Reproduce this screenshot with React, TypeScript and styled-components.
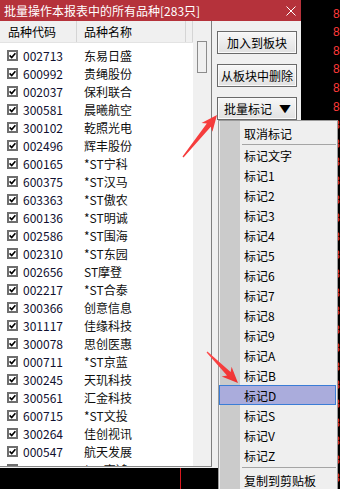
import React from 'react'
import styled, { createGlobalStyle } from 'styled-components'

const GlobalStyle = createGlobalStyle`
  html, body {
    margin: 0;
    padding: 0;
    background: #000;
  }
  body {
    font-family: "Noto Sans CJK SC", "Noto Sans", sans-serif;
    font-size: 12px;
    color: #000;
  }
`

const Screen = styled.div`
  position: relative;
  width: 340px;
  height: 489px;
  overflow: hidden;
  display: flex;
  background: #000;
`

const Window = styled.div`
  width: 301px;
  display: flex;
  flex-direction: column;
`

const TitleBar = styled.div`
  height: 21px;
  background: #b5323b;
  color: #fff;
  display: flex;
  align-items: center;
  justify-content: space-between;
  padding: 0 5px 0 4px;
  font-size: 12px;
  line-height: 21px;
`

const Body = styled.div`
  height: 447px;
  display: flex;
  background: #f0f0f0;
`

const ListBox = styled.div`
  width: 212px;
  height: 446px;
  box-sizing: border-box;
  display: flex;
  background: #fff;
  border-right: 1px solid #7e7e7e;
  border-bottom: 1px solid #8a8a8a;
`

const ListMain = styled.div`
  width: 193px;
  display: flex;
  flex-direction: column;
  overflow: hidden;
`

const Header = styled.div`
  height: 22px;
  box-sizing: border-box;
  display: flex;
  background: #f0f0f0;
  border-bottom: 1px solid #e3e3e3;
  flex-shrink: 0;
`

const HeaderCell = styled.div<{ $w?: number; $pad: number }>`
  ${({ $w }) => ($w ? `width: ${$w}px;` : 'flex: 1;')}
  box-sizing: border-box;
  padding-left: ${({ $pad }) => $pad}px;
  border-right: 1px solid #d5d5d5;
  display: flex;
  align-items: center;
  white-space: nowrap;
`

const Rows = styled.div`
  padding-top: 3px;
  display: flex;
  flex-direction: column;
`

const Row = styled.div`
  height: 18px;
  flex-shrink: 0;
  display: flex;
  align-items: center;
  white-space: nowrap;
`

const Check = styled.span`
  width: 11px;
  height: 11px;
  box-sizing: border-box;
  margin: 0 5px 0 7px;
  border: 2px solid #6e6e6e;
  background: #fff;
  display: flex;
  align-items: center;
  justify-content: center;
`

const Code = styled.span`
  width: 61px;
  color: #101030;
`

const Name = styled.span`
  color: #101010;
`

const ScrollTrack = styled.div`
  width: 18px;
  padding: 20px 0 0 4px;
  box-sizing: border-box;
  background: #f0f0f0;
`

const Thumb = styled.div`
  width: 10px;
  height: 32px;
  box-sizing: border-box;
  border: 1px solid #8c8c8c;
  background: #f0f0f0;
`

const ButtonPanel = styled.div`
  flex: 1;
  display: flex;
  flex-direction: column;
  gap: 10px;
  padding: 10px 0 0 5px;
`

const Button = styled.div`
  width: 80px;
  height: 23px;
  box-sizing: border-box;
  border: 1px solid #6a6a6a;
  background: linear-gradient(#f7f7f7, #e1e1e1);
  box-shadow: inset 0 0 0 1px #fafafa;
  display: flex;
  align-items: center;
  justify-content: center;
  gap: 8px;
  white-space: nowrap;
  font-size: 12px;
`

const Caret = styled.span`
  font-size: 10px;
  transform: scaleX(1.2);
`

const BottomStrip = styled.div`
  height: 21px;
  background: #000;
  display: flex;
`

const RedLine = styled.div`
  width: 1px;
  margin-left: 180px;
  background: #d8181e;
`

const DigitStrip = styled.div`
  flex: 1;
  display: flex;
  flex-direction: column;
  margin-top: -14px;
  padding-left: 32px;
  color: #ff3a3a;
  font-family: "Liberation Sans", sans-serif;
  font-size: 12px;
  line-height: 18.6px;
`

const Menu = styled.div`
  position: absolute;
  left: 218px;
  top: 120px;
  width: 120px;
  height: 380px;
  box-sizing: border-box;
  padding-top: 2px;
  border: 1px solid #9a9a9a;
  background: linear-gradient(to right, #efefef 0 1px, #cbcbcb 1px 21px, #efefef 21px);
  display: flex;
  flex-direction: column;
`

const MenuItem = styled.div<{ $active?: boolean }>`
  height: 20px;
  flex-shrink: 0;
  display: flex;
  align-items: center;
  padding-left: 25px;
  margin-right: 1px;
  white-space: nowrap;
  ${({ $active }) =>
    $active &&
    `
    background: #aaacdc;
    box-shadow: inset 0 0 0 1px #3b7dd6;
  `}
`

const Separator = styled.div<{ $top: number; $bottom: number }>`
  height: 1px;
  flex-shrink: 0;
  background: #a5a5a5;
  margin: ${({ $top, $bottom }) => `${$top}px 1px ${$bottom}px 23px`};
`

const Overlay = styled.svg`
  position: absolute;
  left: 0;
  top: 0;
  pointer-events: none;
`

const STOCKS: [string, string][] = [
  ['002713', '东易日盛'],
  ['600992', '贵绳股份'],
  ['002037', '保利联合'],
  ['300581', '晨曦航空'],
  ['300102', '乾照光电'],
  ['002496', '辉丰股份'],
  ['600165', '*ST宁科'],
  ['600375', '*ST汉马'],
  ['603363', '*ST傲农'],
  ['600136', '*ST明诚'],
  ['002586', '*ST围海'],
  ['002310', '*ST东园'],
  ['002656', 'ST摩登'],
  ['002217', '*ST合泰'],
  ['300366', '创意信息'],
  ['301117', '佳缘科技'],
  ['300078', '思创医惠'],
  ['000711', '*ST京蓝'],
  ['300245', '天玑科技'],
  ['300561', '汇金科技'],
  ['600715', '*ST文投'],
  ['300264', '佳创视讯'],
  ['000547', '航天发展'],
  ['000851', '*ST高鸿'],
]

const MARKS = ['标记文字', '标记1', '标记2', '标记3', '标记4', '标记5', '标记6', '标记7', '标记8', '标记9', '标记A', '标记B', '标记D', '标记S', '标记V', '标记Z']

// tapered annotation arrow from tail to tip
function arrowPoints(x1: number, y1: number, x2: number, y2: number) {
  const dx = x2 - x1
  const dy = y2 - y1
  const len = Math.hypot(dx, dy)
  const ux = dx / len
  const uy = dy / len
  const nx = -uy
  const ny = ux
  const head = 15
  const bx = x2 - ux * head
  const by = y2 - uy * head
  const pts = [
    [x1 + nx * 0.6, y1 + ny * 0.6],
    [bx + ux * 2 + nx * 2.6, by + uy * 2 + ny * 2.6],
    [bx - ux * 1 + nx * 7, by - uy * 1 + ny * 7],
    [x2, y2],
    [bx - ux * 1 - nx * 7, by - uy * 1 - ny * 7],
    [bx + ux * 2 - nx * 2.6, by + uy * 2 - ny * 2.6],
    [x1 - nx * 0.6, y1 - ny * 0.6],
  ]
  return pts.map(([x, y]) => `${x.toFixed(1)},${y.toFixed(1)}`).join(' ')
}

const CheckMark = () => (
  <svg width="7" height="7" viewBox="0 0 7 7">
    <path d="M0.6 3.4 L2.7 5.6 L6.4 1.2" fill="none" stroke="#000" strokeWidth="1.6" />
  </svg>
)

export default function App() {
  return (
    <Screen>
      <GlobalStyle />
      <Window>
        <TitleBar>
          <span>批量操作本报表中的所有品种[283只]</span>
          <svg width="10" height="10" viewBox="0 0 10 10">
            <path d="M0.5 0.5 L9.5 9.5 M9.5 0.5 L0.5 9.5" stroke="#fff" strokeWidth="1" />
          </svg>
        </TitleBar>
        <Body>
          <ListBox>
            <ListMain>
              <Header>
                <HeaderCell $w={77} $pad={8}>品种代码</HeaderCell>
                <HeaderCell $w={109} $pad={7}>品种名称</HeaderCell>
                <HeaderCell $pad={0} />
              </Header>
              <Rows>
                {STOCKS.map(([code, name]) => (
                  <Row key={code}>
                    <Check>
                      <CheckMark />
                    </Check>
                    <Code>{code}</Code>
                    <Name>{name}</Name>
                  </Row>
                ))}
              </Rows>
            </ListMain>
            <ScrollTrack>
              <Thumb />
            </ScrollTrack>
          </ListBox>
          <ButtonPanel>
            <Button>加入到板块</Button>
            <Button>从板块中删除</Button>
            <Button>
              <span>批量标记</span>
              <Caret>▼</Caret>
            </Button>
          </ButtonPanel>
        </Body>
        <BottomStrip>
          <RedLine />
        </BottomStrip>
      </Window>
      <DigitStrip>
        {Array.from({ length: 28 }, (_, i) => (
          <span key={i}>8</span>
        ))}
      </DigitStrip>

      <Menu>
        <MenuItem>取消标记</MenuItem>
        <Separator $top={1} $bottom={0} />
        {MARKS.map((m) => (
          <MenuItem key={m} $active={m === '标记D'}>
            {m}
          </MenuItem>
        ))}
        <Separator $top={2} $bottom={2} />
        <MenuItem>复制到剪贴板</MenuItem>
      </Menu>

      <Overlay width="340" height="489" viewBox="0 0 340 489">
        <defs>
          <linearGradient id="arrowFill" x1="0" y1="0" x2="1" y2="1">
            <stop offset="0" stopColor="#ff4a4a" />
            <stop offset="1" stopColor="#ec2f2f" />
          </linearGradient>
        </defs>
        <polygon points={arrowPoints(183, 157, 217, 115)} fill="url(#arrowFill)" />
        <polygon points={arrowPoints(207, 352, 238, 383)} fill="url(#arrowFill)" />
      </Overlay>
    </Screen>
  )
}
